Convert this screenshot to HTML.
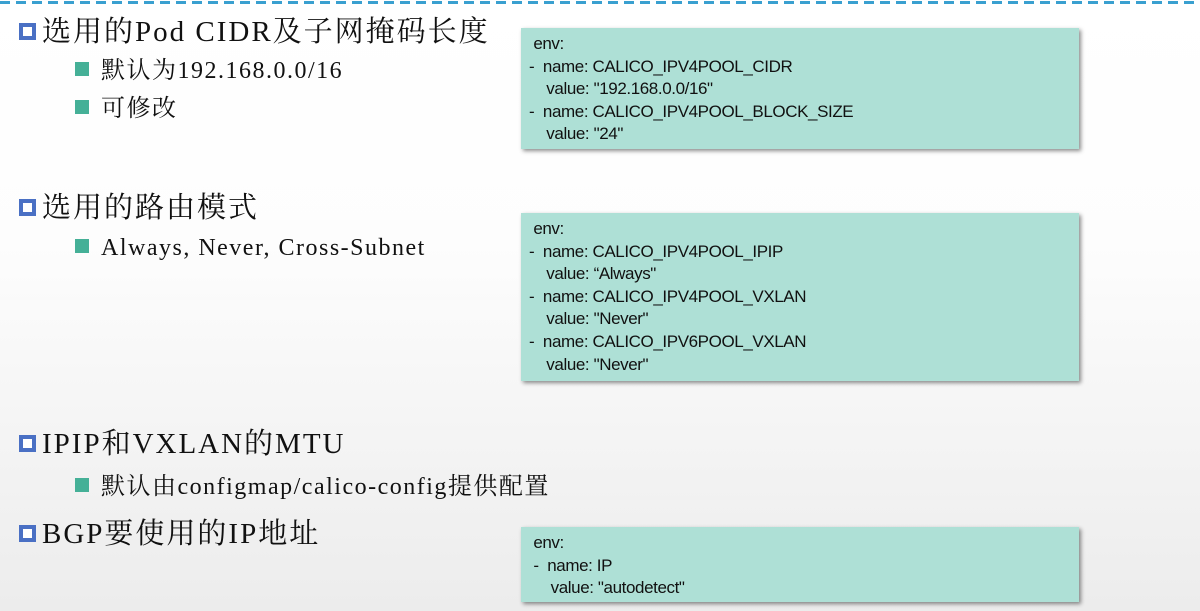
<!DOCTYPE html>
<html><head><meta charset="utf-8"><style>
body{margin:0;width:1200px;height:611px;overflow:hidden;position:relative;background:linear-gradient(#ffffff 0%,#fdfdfd 40%,#ececec 100%);font-family:"Liberation Serif","Noto Serif CJK SC",serif;color:#111}
.dash{position:absolute;left:0;top:1px;width:1200px;height:3px;background:repeating-linear-gradient(90deg,#3aa0d0 0 10px,transparent 10px 16px)}
.h{position:absolute;left:19px;font-size:29px;line-height:34px;white-space:nowrap;letter-spacing:2px}
.h:before{content:"";display:inline-block;width:9px;height:9px;border:4px solid #4a70c4;background:#fff;margin-right:6px;vertical-align:1px}
.s{position:absolute;left:75px;font-size:24px;line-height:30px;white-space:nowrap;letter-spacing:1.5px}
.s:before{content:"";display:inline-block;width:14px;height:14px;background:#45b097;margin-right:12px;vertical-align:2px}
.box{position:absolute;left:521px;width:558px;background:#aee0d6;box-shadow:2px 2px 4px rgba(0,0,0,.45);font-family:"Liberation Sans","Noto Sans CJK SC",sans-serif;font-size:17px;line-height:22.6px;padding:5px 0 0 8px;box-sizing:border-box;white-space:pre;color:#111;letter-spacing:-0.4px}
</style></head><body>
<div class="dash"></div>
<div class="h" style="top:15px">选用的Pod CIDR及子网掩码长度</div>
<div class="s" style="top:56px">默认为192.168.0.0/16</div>
<div class="s" style="top:94px">可修改</div>
<div class="h" style="top:191px">选用的路由模式</div>
<div class="s" style="top:233px">Always, Never, Cross-Subnet</div>
<div class="h" style="top:427px">IPIP和VXLAN的MTU</div>
<div class="s" style="top:472px">默认由configmap/calico-config提供配置</div>
<div class="h" style="top:517px">BGP要使用的IP地址</div>
<div class="box" style="top:28px;height:121px"> env:
-  name: CALICO_IPV4POOL_CIDR
    value: "192.168.0.0/16"
-  name: CALICO_IPV4POOL_BLOCK_SIZE
    value: "24"</div>
<div class="box" style="top:213px;height:168px"> env:
-  name: CALICO_IPV4POOL_IPIP
    value: “Always"
-  name: CALICO_IPV4POOL_VXLAN
    value: "Never"
-  name: CALICO_IPV6POOL_VXLAN
    value: "Never"</div>
<div class="box" style="top:527px;height:75px"> env:
 -  name: IP
     value: "autodetect"</div>
</body></html>
